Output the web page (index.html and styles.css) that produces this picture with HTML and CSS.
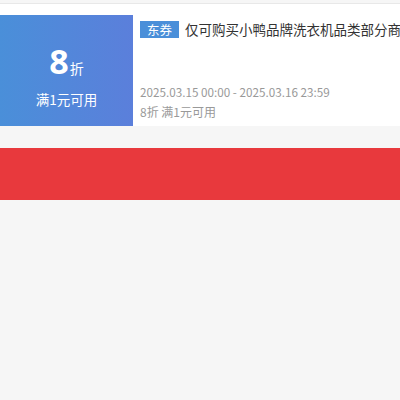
FILE: index.html
```html
<!DOCTYPE html>
<html lang="zh-CN">
<head>
<meta charset="utf-8">
<link rel="stylesheet" href="styles.css">
</head>
<body>
<div class="page-top"></div>
<div class="list">
  <div class="coupon">
    <div class="coupon-value">
      <div class="price"><span class="num">8</span><span class="unit">折</span></div>
      <div class="cond">满1元可用</div>
    </div>
    <div class="coupon-info">
      <div class="title-row"><span class="tag">东券</span><span class="title">仅可购买小鸭品牌洗衣机品类部分商品</span></div>
      <div class="date">2025.03.15 00:00 - 2025.03.16 23:59</div>
      <div class="meta">8折 满1元可用</div>
    </div>
  </div>
</div>
<div class="gap"></div>
<div class="red-bar"></div>
</body>
</html>
```

FILE: styles.css
```css
html, body {
  margin: 0;
  padding: 0;
  background: #f6f6f6;
  font-family: "Noto Sans CJK SC", sans-serif;
  overflow: hidden;
}
.page-top {
  height: 3px;
  border-bottom: 1px solid #e8e8e8;
  background: #f6f6f6;
}
.list {
  background: #fff;
  padding-top: 11px;
}
.coupon {
  display: flex;
  height: 111px;
  background: #fff;
}
.coupon-value {
  width: 133px;
  flex: none;
  background: linear-gradient(to right, #4a8fd9, #5b7fdb);
  color: #fff;
  display: flex;
  flex-direction: column;
  align-items: center;
  padding-top: 26px;
  box-sizing: border-box;
}
.price {
  height: 40px;
  display: flex;
  align-items: baseline;
}
.num {
  font-family: "Open Sans", sans-serif;
  font-weight: 700;
  font-size: 34px;
  line-height: 40px;
}
.unit {
  font-size: 14px;
  margin-left: 1px;
}
.cond {
  font-size: 13.5px;
  line-height: 20px;
  margin-top: 8px;
}
.coupon-info {
  flex: 1;
  min-width: 0;
  padding: 6px 0 4px 7px;
  display: flex;
  flex-direction: column;
  overflow: hidden;
}
.title-row {
  display: flex;
  align-items: center;
  height: 17px;
  white-space: nowrap;
}
.tag {
  background: #4a8fd9;
  color: #fff;
  font-size: 12.5px;
  line-height: 17px;
  padding: 0 7px;
  margin-right: 6px;
  flex: none;
}
.title {
  color: #333;
  font-size: 13.5px;
  line-height: 17px;
}
.date {
  margin-top: auto;
  color: #999;
  font-size: 11.7px;
  line-height: 20px;
  white-space: nowrap;
}
.meta {
  color: #999;
  font-size: 12px;
  line-height: 20px;
  white-space: nowrap;
}
.gap {
  height: 22px;
}
.red-bar {
  height: 52px;
  background: #e8393d;
}
```
